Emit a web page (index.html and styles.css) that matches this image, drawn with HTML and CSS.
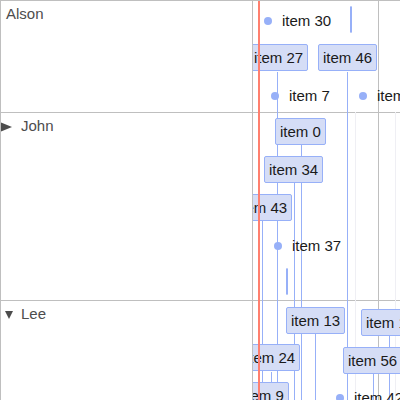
FILE: index.html
```html
<!DOCTYPE html>
<html>
<head>
<meta charset="utf-8">
<link rel="stylesheet" href="styles.css">
</head>
<body>
<div class="timeline">
  <div class="labels">
    <div class="row row-alson"><div class="label">Alson</div></div>
    <div class="row row-john">
      <div class="label">
        <span class="toggle"><svg class="tri-right" width="12" height="10" viewBox="0 0 12 10"><polygon points="0,0 12,5 0,10" fill="#4d4d4d"/></svg></span>
        <span>John</span>
      </div>
    </div>
    <div class="row row-lee">
      <div class="label">
        <span class="toggle"><svg class="tri-down" width="8" height="8" viewBox="0 0 8 8"><polygon points="0,0 8,0 4,8" fill="#4d4d4d"/></svg></span>
        <span>Lee</span>
      </div>
    </div>
  </div>
  <div class="center">
    <div class="row row-alson"></div>
    <div class="row row-john"></div>
    <div class="row row-lee"></div>

    <div class="grid major" style="left:125px"></div>
    <div class="grid minor" style="left:102px"></div>
    <div class="grid minor" style="left:142px"></div>

    <div class="items">
      <div class="line" style="left:24px;top:71px"></div>
      <div class="line" style="left:94px;top:71px"></div>
      <div class="line" style="left:48px;top:144px"></div>
      <div class="line" style="left:41px;top:182px"></div>
      <div class="line" style="left:9px;top:220px"></div>
      <div class="line" style="left:62px;top:332px"></div>
      <div class="line" style="left:136px;top:334px"></div>
      <div class="line" style="left:18px;top:371px"></div>
      <div class="line" style="left:120px;top:372px"></div>

      <div class="range" style="left:97px;top:5px"></div>
      <div class="range" style="left:33px;top:267px"></div>

      <div class="point" style="left:11px;top:11px"><span class="dot"></span><span>item 30</span></div>
      <div class="point" style="left:18px;top:86px"><span class="dot"></span><span>item 7</span></div>
      <div class="point" style="left:106px;top:86px"><span class="dot"></span><span>item 18</span></div>
      <div class="point" style="left:21px;top:236px"><span class="dot"></span><span>item 37</span></div>
      <div class="point" style="left:83px;top:388px"><span class="dot"></span><span>item 42</span></div>

      <div class="box" style="left:-4px;top:43px">item 27</div>
      <div class="box" style="left:65px;top:43px">item 46</div>
      <div class="box" style="left:22px;top:117px">item 0</div>
      <div class="box" style="left:11px;top:155px">item 34</div>
      <div class="box" style="left:-20px;top:193px">item 43</div>
      <div class="box" style="left:33px;top:306px">item 13</div>
      <div class="box" style="left:108px;top:308px">item 14</div>
      <div class="box" style="left:-12px;top:343px">item 24</div>
      <div class="box" style="left:90px;top:346px">item 56</div>
      <div class="box" style="left:-15px;top:381px">item 9</div>
    </div>

    <div class="now"></div>
  </div>
</div>
</body>
</html>
```

FILE: styles.css
```css
* { box-sizing: border-box; }
html, body { margin: 0; padding: 0; }
body {
  width: 400px;
  height: 400px;
  overflow: hidden;
  background: #ffffff;
  font-family: "Liberation Sans", Arial, sans-serif;
  font-size: 15px;
  line-height: 17px;
}
.timeline {
  display: flex;
  height: 400px;
  border-top: 1px solid #bfbfbf;
  border-left: 1px solid #bfbfbf;
  overflow: hidden;
}
.labels {
  width: 252px;
  flex: none;
  border-right: 1px solid #bfbfbf;
  display: flex;
  flex-direction: column;
}
.center {
  flex: 1;
  position: relative;
  overflow: hidden;
  display: flex;
  flex-direction: column;
}
.row {
  border-bottom: 1px solid #bfbfbf;
  flex: none;
}
.row-alson { height: 112px; }
.row-john { height: 188px; }
.row-lee { flex: 1; border-bottom: none; }
.label {
  color: #4d4d4d;
  padding: 4px 5px;
  display: flex;
  align-items: flex-start;
  white-space: nowrap;
}
.toggle {
  width: 21px;
  margin-left: -6px;
  height: 17px;
  position: relative;
  flex: none;
}
.tri-right { position: absolute; left: 0; top: 5px; }
.tri-down { position: absolute; left: 5px; top: 6px; }

.grid {
  position: absolute;
  top: 0;
  bottom: 0;
  width: 1px;
}
.major { background: #bfbfbf; }
.minor { background: #efeff4; top: 111px; }

.items {
  position: absolute;
  inset: 0;
}
.line {
  position: absolute;
  bottom: 0;
  width: 1px;
  background: #97b0f8;
}
.range {
  position: absolute;
  width: 2px;
  height: 27px;
  background: #d5ddf6;
  border: 1px solid #97b0f8;
  border-radius: 2px;
}
.box {
  position: absolute;
  background: #d5ddf6;
  border: 1px solid #97b0f8;
  border-radius: 2px;
  padding: 4px;
  color: #1a1a1a;
  white-space: nowrap;
}
.point {
  position: absolute;
  height: 17px;
  display: flex;
  align-items: center;
  gap: 10px;
  color: #1a1a1a;
  white-space: nowrap;
}
.dot {
  width: 8px;
  height: 8px;
  border-radius: 50%;
  background: #97b0f8;
  flex: none;
}
.now {
  position: absolute;
  left: 5px;
  top: 0;
  bottom: 0;
  width: 2px;
  background: #ff7f6e;
}
```
